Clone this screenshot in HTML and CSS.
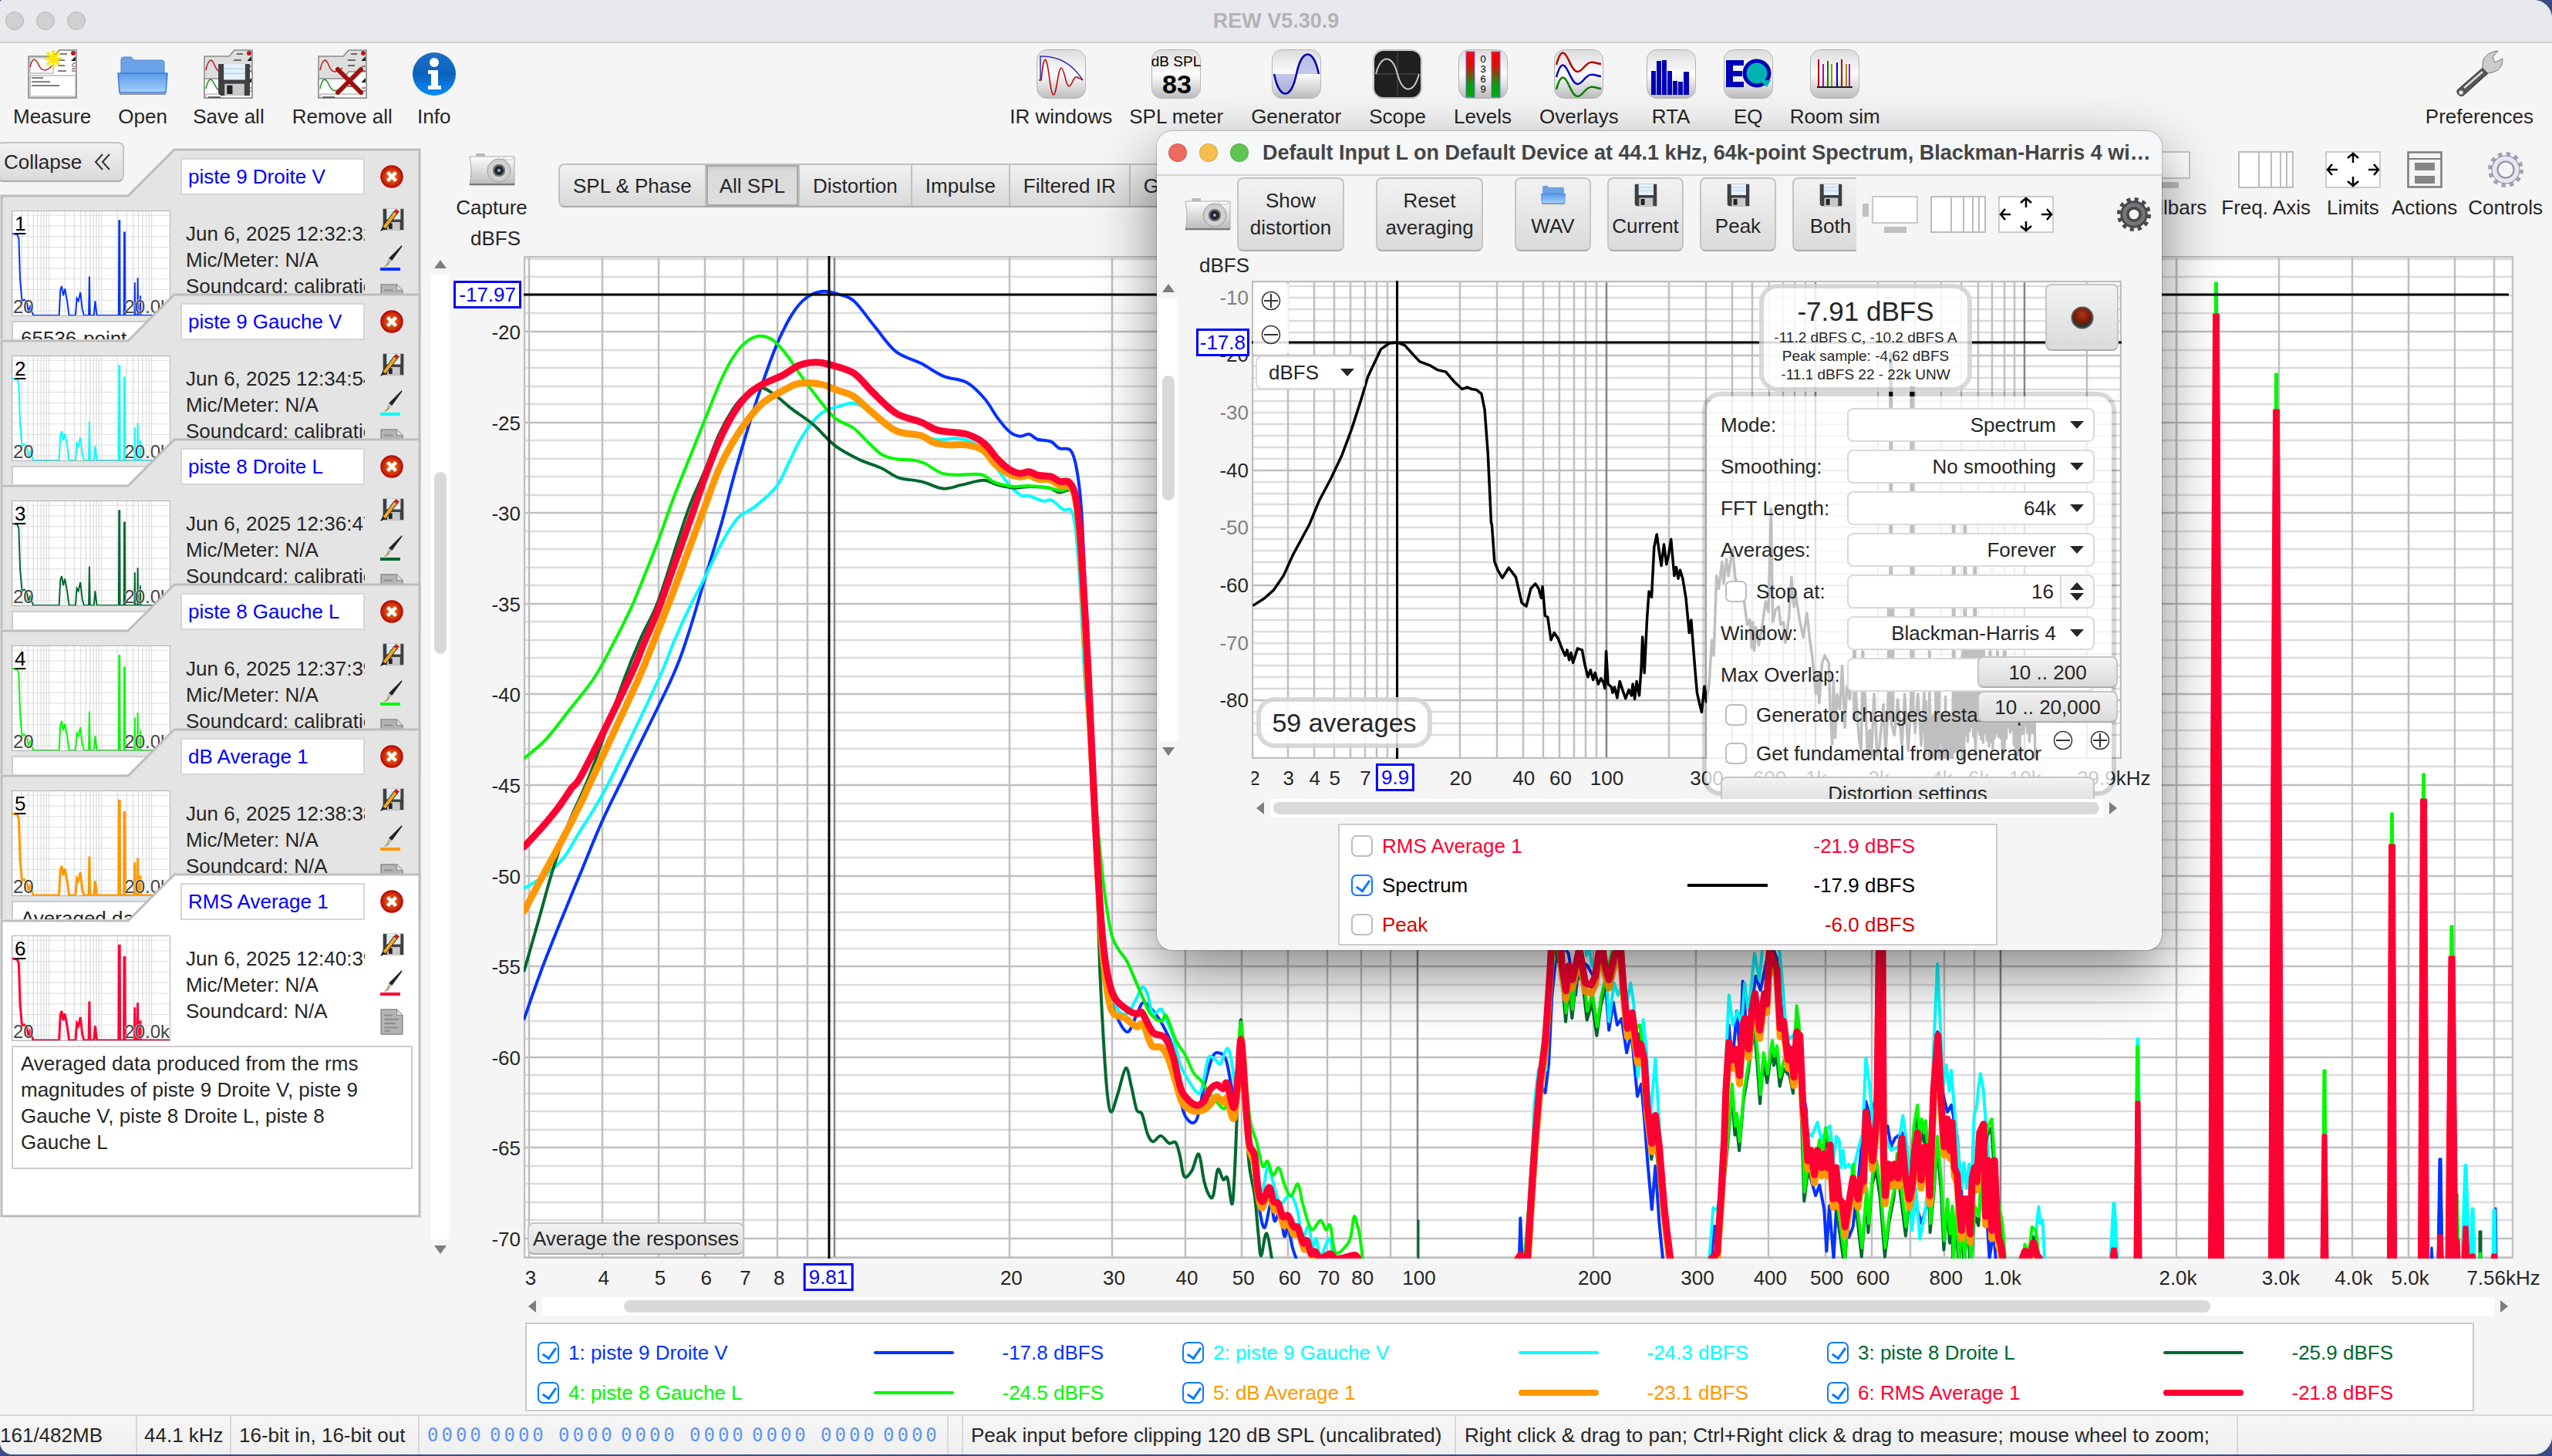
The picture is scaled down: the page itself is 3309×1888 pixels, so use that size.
FILE: index.html
```html
<!DOCTYPE html>
<html lang="en">
<head>
<meta charset="utf-8">
<title>REW V5.30.9</title>
<link rel="stylesheet" href="styles.css">
</head>
<body>
<svg class="sprite" aria-hidden="true">
  <defs>
    <linearGradient id="g-tile" x1="0" y1="0" x2="0" y2="1"><stop offset="0" stop-color="#dcdcdc"/><stop offset=".5" stop-color="#fcfcfc"/><stop offset="1" stop-color="#bdbdbd"/></linearGradient>
    <linearGradient id="g-folder" x1="0" y1="0" x2="0" y2="1"><stop offset="0" stop-color="#5b9bea"/><stop offset="1" stop-color="#a5cffb"/></linearGradient>
    <linearGradient id="g-info" x1="0" y1="0" x2="0" y2="1"><stop offset="0" stop-color="#1f6fc4"/><stop offset=".5" stop-color="#0b62bd"/><stop offset="1" stop-color="#0a8bff"/></linearGradient>
    <linearGradient id="g-level" x1="0" y1="0" x2="0" y2="1"><stop offset="0" stop-color="#f00"/><stop offset=".3" stop-color="#e01000"/><stop offset=".72" stop-color="#0a9a10"/><stop offset="1" stop-color="#00b400"/></linearGradient>
    <linearGradient id="g-metal" x1="0" y1="0" x2="0" y2="1"><stop offset="0" stop-color="#fdfdfd"/><stop offset="1" stop-color="#b9b9b9"/></linearGradient>
    <radialGradient id="g-del"><stop offset="0" stop-color="#f08a1c"/><stop offset="1" stop-color="#c40d05"/></radialGradient>
    <radialGradient id="g-led" cx=".5" cy=".35"><stop offset="0" stop-color="#a83a20"/><stop offset=".8" stop-color="#7a1800"/><stop offset="1" stop-color="#333"/></radialGradient>
  </defs>
  <symbol id="i-doc-half" viewBox="0 0 64 64">
    <path d="M1 9H33L40 1H63V63H1Z" fill="#dedede" stroke="#8a8a8a" stroke-width="1.5"/>
    <path d="M1 38H33L40 29H63V63H1Z" fill="#fff" stroke="#8a8a8a" stroke-width="1.5"/>
    <path d="M3 27C6 13 10 10 14 20S22 32 32 24" fill="none" stroke="#c01818" stroke-width="1.5"/>
    <path d="M3 51C6 37 10 36 14 45S22 57 32 49" fill="none" stroke="#188a18" stroke-width="1.5"/>
    <path d="M3 58V63M3 58H60" stroke="#999" fill="none"/>
    <path d="M43 6h8M39 14h10M39 21h9M39 48h10M6 62h16" stroke="#444" stroke-width="1.5"/>
    <circle cx="59" cy="5" r="3" fill="#c4161c"/><path d="M57 14l5-5v6h-5zM57 42l5-5v6h-5z" fill="#222"/><path d="M57 22h5M57 28h5M57 50h5M57 54h5" stroke="#333"/>
  </symbol>
  <symbol id="i-measure" viewBox="0 0 64 64">
    <path d="M1 9H33L41 1H63V63H1Z" fill="#fff" stroke="#808080" stroke-width="1.5"/>
    <rect x="3" y="11" width="30" height="20" fill="#fff" stroke="#bbb" stroke-width="1.5"/>
    <path d="M3 23C6 10 10 11 14 20S24 29 32 21" fill="none" stroke="#c01818" stroke-width="1.5"/>
    <rect x="3" y="34" width="59" height="27" fill="#fff" stroke="#999"/>
    <path d="M42 6h9M39 14h9M39 21h9M39 28h11M5 37h15M5 42h24M5 47h36" stroke="#555" stroke-width="1.5"/>
    <circle cx="59" cy="5" r="3" fill="#c4161c"/><path d="M56 15l6-6v6z" fill="#222"/><path d="M57 20l5-3M57 25h5M57 28h5" stroke="#333"/><path d="M57 22h5" stroke="#c01818"/>
    <path d="M33 1V23M22 12H44M25 4L41 20M41 4L25 20" stroke="#ffe600" stroke-width="3.5"/>
  </symbol>
  <symbol id="i-folder" viewBox="0 0 66 50">
    <path d="M5 4Q5 1 8 1H18L22 5H58Q61 5 61 8V24H5Z" fill="#6ba1e6" stroke="#4d86d3"/>
    <path d="M1 22H65L63 47H3Z" fill="url(#g-folder)" stroke="#3b7ad0" stroke-width="1.5"/><path d="M3 49H63" stroke="#777" stroke-width="1.5"/>
  </symbol>
  <symbol id="i-floppy" viewBox="0 0 42 42">
    <path d="M1 1H41V41H4L1 38Z" fill="#3f3f41"/><rect x="8" y="1" width="27" height="20" fill="#e4f0fb"/><path d="M8 7H35M8 13H35" stroke="#a9c8e6"/><rect x="9" y="26" width="25" height="15" fill="#c9c9c9"/><rect x="12" y="28" width="7" height="11" fill="#222"/>
  </symbol>
  <symbol id="i-save-pencil" viewBox="0 0 32 30">
    <svg x="4" y="0" width="28" height="29" viewBox="0 0 42 42" preserveAspectRatio="none"><use href="#i-floppy"/></svg>
    <path d="M4 24L19 4L23 7L8 27Z" fill="#f0a81e" stroke="#222"/><path d="M19 4l2-3 5 3-3 4z" fill="#d02018"/><path d="M4 24l-3 6 7-3z" fill="#222"/>
  </symbol>
  <symbol id="i-delete" viewBox="0 0 30 30"><circle cx="15" cy="15" r="14" fill="url(#g-del)" stroke="#b00c06" stroke-width="1.5"/><path d="M9.500 9.500L20.500 20.500M20.500 9.500L9.500 20.500" stroke="#fff" stroke-width="4.500"/></symbol>
  <symbol id="i-brush" viewBox="0 0 30 34"><path d="M28 1L15 19L12 17Z" fill="#222" stroke="#222" stroke-width="1.500"/><path d="M12 17L15 20L12 24L9 21Z" fill="#b9b9b9"/><path d="M10 21L12 24Q9 28 4 28Q8 26 10 21Z" fill="#b99a5a"/><rect x="0" y="29" width="26" height="4" fill="currentColor"/></symbol>
  <symbol id="i-note" viewBox="0 0 28 32"><path d="M1 1H20L27 8V31H1Z" fill="#b4b4b4" stroke="#8a8a8a" stroke-width="1.500"/><path d="M20 1V8H27" fill="#ddd" stroke="#8a8a8a"/><path d="M5 8H15M5 13H22M5 18H18M5 23H22M5 27H12" stroke="#8c8c8c" stroke-width="2"/></symbol>
  <symbol id="i-camera" viewBox="0 0 60 42">
    <rect x="9" y="0" width="12" height="4" rx="1" fill="#bbb"/><path d="M1 4H59V41H1Q5 22 1 4Z" fill="url(#g-metal)" stroke="#aaa"/><path d="M1 39H59V41H1Z" fill="#777"/><rect x="45" y="4" width="12" height="4" rx="2" fill="#fff" stroke="#bbb"/>
    <circle cx="39" cy="22" r="15" fill="#cfcfcf" stroke="#999"/><circle cx="39" cy="22" r="9" fill="#777" stroke="#eee"/><circle cx="39" cy="22" r="6" fill="#1e2430"/><circle cx="39" cy="22" r="2" fill="#9db4d0"/>
  </symbol>
  <symbol id="i-freq" viewBox="0 0 72 48"><rect x="1" y="1" width="70" height="46" fill="#fff" stroke="#bcbcbc" stroke-width="2"/><path d="M27 1V47M43 1V47M55 1V47M63 1V47" stroke="#bcbcbc" stroke-width="2"/></symbol>
  <symbol id="i-limits" viewBox="0 0 72 48"><rect x="1" y="1" width="70" height="46" fill="#fff" stroke="#bcbcbc" stroke-width="1.500"/><path d="M36 15V3M29 9L36 3L43 9M36 33V45M29 39L36 45L43 39M16 24H3M9 17L3 24L9 31M56 24H69M63 17L69 24L63 31" fill="none" stroke="#000" stroke-width="2.500"/></symbol>
  <symbol id="i-bars" viewBox="0 0 72 48"><rect x="0" y="10" width="8" height="17" fill="#bfbfbf"/><rect x="13" y="1" width="58" height="34" fill="#fff" stroke="#c8c8c8" stroke-width="2"/><rect x="28" y="40" width="29" height="8" fill="#bfbfbf"/></symbol>
  <symbol id="i-actions" viewBox="0 0 46 48"><rect x="1.500" y="1.500" width="43" height="45" fill="#f4f4f4" stroke="#7c7c7c" stroke-width="2.500"/><path d="M1 10H45" stroke="#7c7c7c" stroke-width="2"/><path d="M10 20H36M10 37H36" stroke="#858585" stroke-width="10"/></symbol>
  <symbol id="i-gear" viewBox="0 0 48 48"><circle cx="24" cy="24" r="20" fill="none" stroke="currentColor" stroke-width="6" stroke-dasharray="5.24 5.24"/><circle cx="24" cy="24" r="12.500" fill="none" stroke="currentColor" stroke-width="12"/><circle cx="24" cy="24" r="13" fill="none" stroke="#dcdcec" stroke-opacity=".3" stroke-width="5"/></symbol>
  <symbol id="i-gear-light" viewBox="0 0 48 48"><circle cx="24" cy="24" r="20" fill="none" stroke="#a2a2ae" stroke-width="6" stroke-dasharray="5.24 5.24"/><circle cx="24" cy="24" r="14" fill="#f5f5f5" stroke="#8d8d9c" stroke-width="9"/><circle cx="24" cy="24" r="14.500" fill="none" stroke="#e6e6f2" stroke-width="6"/></symbol>
  <symbol id="i-zoom-in" viewBox="0 0 26 26"><circle cx="13" cy="13" r="11.500" fill="none" stroke="#333" stroke-width="1.500"/><path d="M4 13H22M13 4V22" stroke="#333" stroke-width="2"/></symbol>
  <symbol id="i-zoom-out" viewBox="0 0 26 26"><circle cx="13" cy="13" r="11.500" fill="none" stroke="#333" stroke-width="1.500"/><path d="M4 13H22" stroke="#333" stroke-width="2"/></symbol>
  <symbol id="i-tile" viewBox="0 0 64 64"><rect x=".5" y=".5" width="63" height="63" rx="13" fill="url(#g-tile)" stroke="#b4b4b4"/></symbol>
</svg>

<div class="app">
  <header class="titlebar">
    <div class="lights idle"><i></i><i></i><i></i></div>
    <h1>REW V5.30.9</h1>
  </header>

  <nav class="toolbar">
    <div class="tools left">
      <button class="tool"><svg class="icon"><use href="#i-measure"/></svg><span>Measure</span></button>
      <button class="tool"><svg class="icon wide" viewBox="0 0 66 64"><use href="#i-folder" y="9" width="66" height="50"/></svg><span>Open</span></button>
      <button class="tool"><svg class="icon" viewBox="0 0 64 64"><use href="#i-doc-half" width="64" height="64"/><use href="#i-floppy" x="18" y="18" width="43" height="43"/></svg><span>Save all</span></button>
      <button class="tool"><svg class="icon" viewBox="0 0 64 64"><use href="#i-doc-half" width="64" height="64"/><path d="M26 26L56 56M56 26L26 56" stroke="#a01010" stroke-width="6" stroke-linecap="round"/></svg><span>Remove all</span></button>
      <button class="tool"><svg class="icon" viewBox="0 0 64 64"><circle cx="32" cy="32" r="28" fill="url(#g-info)"/><circle cx="32" cy="17" r="6" fill="#fff"/><path d="M24 27H37V47H41V52H24V47H28V32H24Z" fill="#fff"/></svg><span>Info</span></button>
    </div>
    <div class="tools middle">
      <div class="pair">
        <button class="tool"><svg class="icon" viewBox="0 0 64 64"><use href="#i-tile"/><path d="M5 40V9Q40 8 60 40" fill="none" stroke="#3030c0" stroke-width="1.500"/><path d="M3 40H6C8 20 10 8 13 16S18 59 22 59S28 24 32 24S38 48 42 48S48 34 52 36S58 38 60 40" fill="none" stroke="#b80000" stroke-width="1.500"/></svg><span>IR windows</span></button>
        <button class="tool"><svg class="icon" viewBox="0 0 64 64"><use href="#i-tile"/><text x="32" y="22" font-size="19" text-anchor="middle">dB SPL</text><text x="33" y="57" font-size="34" font-weight="bold" text-anchor="middle">83</text></svg><span>SPL meter</span></button>
      </div>
      <button class="tool"><svg class="icon" viewBox="0 0 64 64"><use href="#i-tile"/><path d="M3 32C10 66 25 66 32 32S54 -2 61 32Z" fill="#8a94dc" fill-opacity=".5"/><path d="M3 32C10 66 25 66 32 32S54 -2 61 32" fill="none" stroke="#0000b4" stroke-width="2.500"/></svg><span>Generator</span></button>
      <button class="tool"><svg class="icon" viewBox="0 0 64 64"><use href="#i-tile"/><rect x="2" y="2" width="60" height="60" rx="12" fill="#202020"/><path d="M32 4V60M4 32H60" stroke="#555"/><path d="M4 32C11 6 25 6 32 32S53 58 60 32" fill="none" stroke="#c8c8c8" stroke-width="2"/></svg><span>Scope</span></button>
      <button class="tool"><svg class="icon" viewBox="0 0 64 64"><use href="#i-tile"/><rect x="10" y="3" width="11" height="59" fill="url(#g-level)" stroke="#66e"/><rect x="43" y="3" width="11" height="59" fill="url(#g-level)" stroke="#66e"/><text x="32" y="17" font-size="13" text-anchor="middle">0</text><text x="32" y="30" font-size="13" text-anchor="middle">3</text><text x="32" y="43" font-size="13" text-anchor="middle">6</text><text x="32" y="56" font-size="13" text-anchor="middle">9</text></svg><span>Levels</span></button>
      <button class="tool"><svg class="icon" viewBox="0 0 64 64"><use href="#i-tile"/><g fill="none" stroke-width="2.500"><path d="M3 20C8 2 12 0 18 12S28 36 38 24S52 18 61 19" stroke="#b80000"/><path d="M3 36C8 18 12 16 18 28S28 52 38 40S52 34 61 35" stroke="#0000c0"/><path d="M3 52C8 34 12 32 18 44S28 68 38 56S52 50 61 51" stroke="#008000"/></g></svg><span>Overlays</span></button>
      <button class="tool"><svg class="icon" viewBox="0 0 64 64"><use href="#i-tile"/><path d="M6 59V28H12V59ZM13 59V15H19V59ZM20 59V14H26V59ZM27 59V28H33V59ZM34 59V41H40V59ZM41 59V42H47V59ZM48 59V29H55V59Z" fill="#0000b8"/></svg><span>RTA</span></button>
      <div class="pair">
        <button class="tool"><svg class="icon" viewBox="0 0 64 64"><use href="#i-tile"/><path d="M3 14H26V21H12V28H24V35H12V42H26V49H3Z" fill="#0000b8"/><ellipse cx="43" cy="31" rx="16" ry="16" fill="#00b2b2" stroke="#0000b8" stroke-width="5"/><path d="M46 40L61 40L56 49Z" fill="#00b2b2"/></svg><span>EQ</span></button>
        <button class="tool"><svg class="icon" viewBox="0 0 64 64"><use href="#i-tile"/><g stroke-width="2"><path d="M11 13V49M41 13V49" stroke="#b80000"/><path d="M17 19V49M51 19V49" stroke="#b800b8"/><path d="M23 15V49" stroke="#008000"/><path d="M28 19V49M47 19V49" stroke="#a88a00"/><path d="M35 17V49" stroke="#0000b8"/><path d="M9 49H55" stroke="#222"/></g></svg><span>Room sim</span></button>
      </div>
    </div>
    <div class="tools right">
      <button class="tool"><svg class="icon" viewBox="0 0 64 64"><path d="M3 53L36 24L43 31L11 60A6 6 0 0 1 3 53Z" fill="#555" stroke="#333"/><path d="M12 50L36 29" stroke="#ddd" stroke-width="2.500"/><path d="M36 24Q34 8 50 3L56 2L49 10L52 17L62 12Q62 26 51 29Q46 31 43 31Z" fill="#ccc" stroke="#777"/><circle cx="8" cy="56" r="3" fill="#eee" stroke="#888"/></svg><span>Preferences</span></button>
    </div>
  </nav>

  <div class="workspace">
    <aside class="sidebar">
      <button class="btn collapse">Collapse <svg viewBox="0 0 22 22"><path d="M11 1L2 11L11 21M20 1L11 11L20 21" fill="none" stroke="#333" stroke-width="2"/></svg></button>
      <div class="cards" id="cards"></div>
      <div class="vscroll side"><b class="up"></b><div class="track"><i></i></div><b class="down"></b></div>
    </aside>

    <main class="main">
      <div class="graphbar">
        <div class="capture">
          <button class="tool small"><svg class="cam"><use href="#i-camera"/></svg><span>Capture</span></button>
          <p class="unit">dBFS</p>
        </div>
        <div class="tabs">
          <button>SPL &amp; Phase</button><button class="on">All SPL</button><button>Distortion</button><button>Impulse</button><button>Filtered IR</button><button>GD</button>
        </div>
        <div class="viewtools">
          <button class="tool small"><svg class="view"><use href="#i-bars"/></svg><span>Scrollbars</span></button>
          <button class="tool small"><svg class="view"><use href="#i-freq"/></svg><span>Freq. Axis</span></button>
          <button class="tool small"><svg class="view"><use href="#i-limits"/></svg><span>Limits</span></button>
          <button class="tool small"><svg class="view"><use href="#i-actions"/></svg><span>Actions</span></button>
          <button class="tool small"><svg class="view"><use href="#i-gear-light"/></svg><span>Controls</span></button>
        </div>
      </div>
      <div class="graph">
        <div class="yaxis" id="main-y"></div>
        <div class="plot">
          <svg id="main-plot" viewBox="0 0 2580 1300" preserveAspectRatio="none"></svg>
          <button class="btn average">Average the responses</button>
        </div>
      </div>
      <div class="xaxis" id="main-x"></div>
      <div class="hscroll"><b class="prev"></b><div class="track"><i></i></div><b class="next"></b></div>
      <div class="legend" id="legend"></div>
    </main>
  </div>

  <footer class="status">
    <span class="c1">161/482MB</span><span class="c2">44.1 kHz</span><span class="c3">16-bit in, 16-bit out</span>
    <span class="bits" id="bits"></span><span class="c5"></span>
    <span class="c6">Peak input before clipping 120 dB SPL (uncalibrated)</span><span class="c7">Right click &amp; drag to pan; Ctrl+Right click &amp; drag to measure; mouse wheel to zoom;</span>
  </footer>
</div>

<section class="dialog" aria-label="RTA">
  <header class="dialog-title">
    <div class="lights"><i></i><i></i><i></i></div>
    <h2>Default Input L on Default Device at 44.1 kHz, 64k-point Spectrum, Blackman-Harris 4 wi…</h2>
  </header>
  <div class="dialog-tools">
    <svg class="cam"><use href="#i-camera"/></svg>
    <div class="dialog-buttons">
      <button class="btn big">Show<br>distortion</button>
      <button class="btn big">Reset<br>averaging</button>
      <div class="files">
        <button class="btn file"><svg><use href="#i-folder"/></svg>WAV</button>
        <button class="btn file"><svg><use href="#i-floppy"/></svg>Current</button>
        <button class="btn file"><svg><use href="#i-floppy"/></svg>Peak</button>
        <button class="btn file"><svg><use href="#i-floppy"/></svg>Both</button>
      </div>
    </div>
    <svg class="view"><use href="#i-bars"/></svg><svg class="view"><use href="#i-freq"/></svg><svg class="view"><use href="#i-limits"/></svg>
    <svg class="view dark"><use href="#i-gear"/></svg>
  </div>
  <p class="unit">dBFS</p>
  <div class="rta">
    <div class="vscroll"><b class="up"></b><div class="track"><i></i></div><b class="down"></b></div>
    <div class="yaxis" id="rta-y"></div>
    <div class="stage">
      <svg id="rta-plot" viewBox="0 0 1128 620" preserveAspectRatio="none"></svg>
      <div class="xaxis" id="rta-x"></div>
      <div class="zoom-y"><svg><use href="#i-zoom-in"/></svg><svg><use href="#i-zoom-out"/></svg></div>
      <div class="select unit-select"><select aria-label="Unit"><option>dBFS</option></select></div>
      <div class="bubble averages">59 averages</div>
      <div class="bubble level"><strong>-7.91 dBFS</strong><span>-11.2 dBFS C, -10.2 dBFS A</span><span>Peak sample: -4,62 dBFS</span><span>-11.1 dBFS 22 - 22k UNW</span></div>
      <button class="btn record" aria-label="Record"><svg viewBox="0 0 30 30"><circle cx="15" cy="15" r="13.500" fill="url(#g-led)" stroke="#555" stroke-width="2"/></svg></button>
      <form class="bubble panel">
        <label for="mode">Mode:</label><div class="select"><select id="mode"><option>Spectrum</option></select></div>
        <label for="smooth">Smoothing:</label><div class="select"><select id="smooth"><option>No smoothing</option></select></div>
        <label for="fft">FFT Length:</label><div class="select"><select id="fft"><option>64k</option></select></div>
        <label for="avg">Averages:</label><div class="select"><select id="avg"><option>Forever</option></select></div>
        <label class="check"><input type="checkbox">Stop at:</label><div class="spin"><input type="text" value="16" aria-label="Stop at"></div>
        <label for="win">Window:</label><div class="select"><select id="win"><option>Blackman-Harris 4</option></select></div>
        <label for="overlap">Max Overlap:</label><div class="select bare"><select id="overlap"><option></option></select></div>
        <label class="check full"><input type="checkbox">Generator changes restart capture</label>
        <label class="check full"><input type="checkbox">Get fundamental from generator</label>
        <button type="button" class="btn full distortion">Distortion settings</button>
      </form>
      <div class="ranges"><button class="btn">10 .. 200</button><button class="btn">10 .. 20,000</button></div>
      <div class="zoom-x"><svg><use href="#i-zoom-out"/></svg><svg><use href="#i-zoom-in"/></svg></div>
    </div>
  </div>
  <div class="hscroll rta-scroll"><b class="prev"></b><div class="track"><i></i></div><b class="next"></b></div>
  <div class="rta-legend">
    <label class="rms"><input type="checkbox"><span>RMS Average 1</span><i></i><output>-21.9 dBFS</output></label>
    <label><input type="checkbox" checked><span>Spectrum</span><i class="line"></i><output>-17.9 dBFS</output></label>
    <label class="peak"><input type="checkbox"><span>Peak</span><i></i><output>-6.0 dBFS</output></label>
  </div>
</section>
<script src="app.js"></script>
</body>
</html>
```
FILE: styles.css
```css
* { box-sizing: border-box; }
body { margin: 0; height: 100vh; overflow: hidden; background: #3c4b86; color: #262626; font: 26px/32px "Liberation Sans", Arial, sans-serif; }
button, input, select, output { font: inherit; color: inherit; margin: 0; }
button { background: none; border: 0; padding: 0; white-space: nowrap; }
h1, h2, p { margin: 0; font-size: 26px; }
svg { display: block; }
svg text { font-family: "Liberation Sans", Arial, sans-serif; fill: #000; }
.sprite { position: absolute; width: 0; height: 0; }

.app { height: calc(100vh - 2px); display: flex; flex-direction: column; background: #f5f5f5; border-radius: 4px 24px 24px 16px; overflow: hidden; }

.titlebar { height: 56px; flex: none; display: grid; grid-template-columns: 1fr auto 1fr; align-items: center; background: #e8e9ed; border-bottom: 2px solid #cfcfd1; }
.titlebar h1 { color: #b2b3b6; font-size: 27px; }
.lights { display: flex; gap: 16px; padding-left: 7px; }
.lights i { width: 24px; height: 24px; border-radius: 50%; border: 1px solid rgba(0, 0, 0, .12); background: #ed6a5e; }
.lights i:nth-child(2) { background: #f5bf4f; }
.lights i:nth-child(3) { background: #61c554; }
.lights.idle i { background: #cfd0d2; border-color: #b5b5b8; }

.toolbar { height: 116px; flex: none; display: grid; grid-template-columns: 39.6% auto 1fr; padding: 8px 24px 0 14px; }
.tools { display: flex; align-items: flex-start; gap: 36px; }
.tools.left { padding-left: 3px; }
.tools.left .tool:nth-child(2) { margin-right: -4px; }
.tools.left .tool:nth-child(4) { margin-right: -14px; }
.tools.left .tool:nth-child(1) { margin-right: -2px; }
.tools.right { justify-content: flex-end; }
.pair { display: flex; gap: 22px; }
.tool { display: flex; flex-direction: column; align-items: center; gap: 7px; }
.icon { width: 64px; height: 64px; }
.icon.wide { width: 66px; }

.workspace { flex: 1; display: flex; min-height: 0; }
.sidebar { width: 588px; flex: none; position: relative; display: flex; }
.btn { background: linear-gradient(#f2f2f2, #dadada); border: 2px solid #c4c4c4; border-bottom-color: #acacac; border-radius: 8px; text-align: center; }
.collapse { position: absolute; left: -4px; top: 12px; width: 165px; height: 52px; z-index: 2; display: flex; align-items: center; gap: 16px; padding-left: 7px; }
.collapse svg { width: 22px; height: 22px; }
.cards { width: 559px; padding-top: 20px; }
.card { position: relative; height: 248px; margin-bottom: -60px; overflow: hidden; padding-left: 15px; display: grid; grid-template-columns: 206px 239px 44px; grid-template-rows: 217px 160px; gap: 7px 13px; align-items: start; }
.card.selected { height: 447px; margin-bottom: 0; }
.card > * { position: relative; }
.card > .shape { position: absolute; left: 0; top: 0; width: 547px; height: 447px; fill: #e4e4e4; stroke: #bdbdbd; stroke-width: 3; }
.card.selected > .shape { fill: #fff; }
.thumb { margin-top: 81px; height: 137px; border: 1px solid #b0b0b0; background: #fff; }
.thumb svg { width: 100%; height: 100%; }
.thumb b, .thumb span { position: absolute; font-size: 24px; font-weight: normal; line-height: 26px; color: #444; text-shadow: 0 0 2px #fff, 0 0 2px #fff; bottom: -2px; left: 1px; }
.thumb span { left: auto; right: 0; }
.thumb u { position: absolute; left: 3px; top: 0; font-size: 26px; color: #000; text-underline-offset: 3px; }
.meta { overflow: hidden; white-space: nowrap; padding-top: 13px; }
.meta input { display: block; width: 239px; height: 48px; border: 2px solid #d6d6d6; background: #fff; color: #00f; padding: 0 8px; margin-bottom: 33px; }
.meta p { padding-left: 7px; line-height: 34px; }
.side-icons { display: flex; flex-direction: column; align-items: center; padding-top: 22px; }
.side-icons svg { flex: none; width: 32px; height: 34px; margin: 8px 0; }
.side-icons svg:first-child { width: 30px; height: 30px; margin: 0 0 16px; }
.notes { grid-column: 1 / 4; width: 520px; height: 160px; border: 2px solid #ccc; background: #fff; font: inherit; color: inherit; line-height: 34px; resize: none; padding: 4px 44px 0 10px; overflow: hidden; }

.vscroll { width: 24px; display: flex; flex-direction: column; align-items: center; }
.vscroll b, .hscroll b { border: 8px solid transparent; flex: none; }
.vscroll .up { border-top: 0; border-bottom: 11px solid #7d7d7d; }
.vscroll .down { border-bottom: 0; border-top: 11px solid #7d7d7d; }
.vscroll .track { flex: 1; width: 24px; background: #fff; margin: 8px 0; padding: 0 4px; }
.vscroll i { display: block; width: 16px; border-radius: 8px; background: #d9d9d9; }
.vscroll.side { padding-top: 165px; margin-bottom: 208px; }
.side .track i { margin-top: 256px; height: 236px; }
.hscroll { display: flex; align-items: center; height: 24px; }
.hscroll .prev { border-left: 0; border-right: 10px solid #7d7d7d; }
.hscroll .next { border-right: 0; border-left: 10px solid #7d7d7d; }
.hscroll .track { flex: 1; height: 24px; background: #fff; margin: 0 8px; padding: 4px 0; }
.hscroll i { display: block; height: 16px; border-radius: 8px; background: #d9d9d9; }

.main { flex: 1; min-width: 0; display: flex; flex-direction: column; }
.graphbar { height: 160px; flex: none; display: flex; align-items: flex-start; padding: 24px 12px 0 0; }
.capture { width: 99px; }
.capture .tool { width: 99px; }
.tool.small { gap: 9px; }
.cam { width: 60px; height: 48px; flex: none; }
.unit { text-align: right; padding: 8px 12px 0 0; }
.tabs { display: flex; margin: 16px 0 0 37px; height: 57px; border: 2px solid #c0c0c0; border-bottom-color: #aaa; border-radius: 8px; background: linear-gradient(#f2f2f2, #d8d8d8); }
.tabs button { padding: 0 17px; border-right: 2px solid #c0c0c0; }
.tabs .on { background: linear-gradient(#c8c8c8, #dadada 8px, #dedede); box-shadow: inset 0 0 0 2px #a8a8a8; }
.viewtools { display: flex; gap: 14px; margin-left: auto; }
.viewtools .tool:nth-child(-n+2) { margin-right: 5px; }
.view { width: 72px; height: 48px; }
.viewtools .tool:nth-child(4) .view { width: 46px; }

.graph { flex: 1; min-height: 0; display: flex; }
.yaxis { position: relative; width: 91px; flex: none; }
.yaxis span, .yaxis em { position: absolute; right: 4px; line-height: 32px; margin-top: -16px; font-style: normal; }
.yaxis em, .xaxis em { border: 3px solid #00f; color: #00f; background: #fff; line-height: 30px; padding: 0 4px; margin-top: -18px; right: 3px; z-index: 1; }
.yaxis .dim { color: #808080; }
.plot { position: relative; flex: 1; margin-right: 50px; }
.plot svg { position: absolute; width: 100%; height: 100%; background: #fff; overflow: hidden; }
.plot .average { position: absolute; left: 5px; bottom: 5px; height: 42px; padding: 0 5px; }
.xaxis { position: relative; height: 50px; margin: 0 50px 0 91px; flex: none; }
.xaxis span, .xaxis em { position: absolute; top: 9px; transform: translateX(-50%); font-style: normal; white-space: nowrap; }
.xaxis em { top: 6px; margin: 0; right: auto; }
.main .hscroll { margin: 0 57px 0 97px; flex: none; }
.main .hscroll i { margin: 0 368px 0 106px; }
.legend { height: 115px; flex: none; margin: 9px 101px 4px 93px; border: 2px solid #ccc; background: #fff; display: grid; grid-template-columns: repeat(3, 836px); align-content: start; padding-top: 11px; }
.legend label { display: grid; grid-template-columns: 28px 384px 104px 182px; column-gap: 12px; align-items: center; height: 52px; padding-left: 14px; }
.legend output, .rta-legend output { text-align: right; }
.legend i { height: 4px; border-radius: 4px; background: currentColor; }
.legend .thick i { height: 8px; }

input[type="checkbox"] { appearance: none; width: 28px; height: 28px; flex: none; border: 2px solid #bdbdbd; border-radius: 7px; background: #fff; position: relative; }
input[type="checkbox"]:checked { border-color: #0a7aff; }
input[type="checkbox"]:checked::after { content: ""; position: absolute; left: 8px; top: 2px; width: 8px; height: 15px; border: solid #0a7aff; border-width: 0 3px 3px 0; transform: rotate(35deg); }

.status { height: 52px; flex: none; display: flex; align-items: center; border-top: 2px solid #d8d8d8; background: linear-gradient(#f6f6f6, #efefef); white-space: nowrap; line-height: 50px; }
.status > span { height: 50px; border-right: 2px solid #d8d8d8; padding: 0 10px; flex: none; }
.status .c1 { width: 178px; padding-left: 0; }
.status .c2 { width: 122px; padding: 0 9px; }
.status .c3 { width: 244px; }
.status .bits { width: 686px; display: flex; gap: 20px; color: #5f94ee; font: 24px/50px "DejaVu Sans Mono", monospace; }
.bits u { text-decoration: none; display: flex; gap: 12px; }
.bits s { text-decoration: none; display: flex; gap: 4px; width: 69px; }
.status .c5 { width: 19px; padding: 0; }
.status .c6 { width: 639px; }
.status .c7 { width: 1014px; padding-left: 11px; }

.dialog { position: absolute; left: 1500px; top: 170px; width: 1303px; background: #f5f5f5; border-radius: 20px; box-shadow: 0 0 2px rgba(0, 0, 0, .6), 0 30px 80px rgba(0, 0, 0, .48); overflow: hidden; padding-bottom: 6px; }
.dialog-title { display: flex; align-items: center; height: 58px; background: #f5f7f9; border-bottom: 2px solid #d4d5d6; }
.dialog-title .lights { padding-left: 15px; }
.dialog-title h2 { margin-left: 18px; color: #454545; white-space: nowrap; font-size: 27px; }
.dialog-tools { display: flex; align-items: center; height: 100px; padding: 0 13px 0 36px; }
.dialog-buttons { display: flex; width: 803px; margin: 0 8px; overflow: hidden; gap: 41px; }
.btn.big { width: 139px; height: 96px; flex: none; line-height: 35px; }
.files { display: flex; gap: 21px; }
.file { width: 99px; height: 96px; flex: none; display: flex; flex-direction: column; align-items: center; gap: 9px; padding-top: 6px; }
.file svg { width: 32px; height: 30px; }
.dialog-tools .view { margin-right: 16px; flex: none; }
.dialog-tools .dark { width: 46px; color: #4a4a4a; margin: 0 0 0 auto; }
.dialog > .unit { width: 120px; height: 36px; padding: 0; }
.rta { display: flex; height: 672px; padding-left: 3px; }
.rta .vscroll { padding-top: 4px; height: 616px; }
.rta .vscroll .track i { margin-top: 100px; height: 162px; }
.rta .yaxis { width: 96px; height: 620px; }
.rta .yaxis em { right: 3px; padding: 0 2px; }
.stage { position: relative; flex: 1; height: 672px; overflow: hidden; }
#rta-plot { width: 1128px; height: 620px; background: #fff; }
#rta-x { width: 1128px; margin: 0; }
.zoom-y { position: absolute; left: 2px; top: 4px; width: 46px; height: 90px; background: rgba(255, 255, 255, .85); display: flex; flex-direction: column; align-items: center; gap: 18px; padding-top: 9px; }
.zoom-y svg, .zoom-x svg { width: 26px; height: 26px; }
.zoom-x { position: absolute; left: 1039px; top: 583px; display: flex; gap: 22px; }
.select { position: relative; height: 44px; }
.select select { appearance: none; width: 100%; height: 44px; border: 2px solid #d9d9d9; border-radius: 8px; background: #fff; text-align: right; text-align-last: right; padding: 0 48px 0 8px; }
.select::after { content: ""; position: absolute; right: 14px; top: 17px; border: 9px solid transparent; border-top: 10px solid #262626; border-bottom: 0; }
.select.bare::after { display: none; }
.unit-select { position: absolute; left: 5px; top: 97px; width: 142px; }
.unit-select select { text-align: left; text-align-last: left; padding: 0 0 0 15px; }
.spin { position: relative; height: 44px; }
.spin input { width: 321px; height: 44px; border: 2px solid #d9d9d9; border-radius: 8px; background: linear-gradient(to left, #fafafa 41px, #d9d9d9 41px, #d9d9d9 43px, #fff 43px); text-align: right; padding-right: 51px; }
.spin::before, .spin::after { content: ""; position: absolute; right: 14px; border: 9px solid transparent; }
.spin::before { top: 10px; border-bottom: 10px solid #262626; border-top: 0; }
.spin::after { bottom: 10px; border-top: 10px solid #262626; border-bottom: 0; }
.bubble { position: absolute; border: 6px solid rgba(0, 0, 0, .15); border-radius: 24px; background: rgba(255, 255, 255, .75); background-clip: padding-box; }
.averages { left: 6px; top: 540px; width: 228px; height: 66px; font-size: 34px; line-height: 54px; text-align: center; background: rgba(255, 255, 255, .85); }
.level { left: 658px; top: 4px; width: 276px; height: 140px; display: flex; flex-direction: column; align-items: center; font-size: 19px; line-height: 24px; padding-top: 8px; white-space: nowrap; background: rgba(255, 255, 255, .85); }
.level strong { font-size: 35px; font-weight: normal; line-height: 44px; }
.record { position: absolute; left: 1029px; top: 4px; width: 95px; height: 87px; display: grid; place-items: center; }
.record svg { width: 30px; height: 30px; }
.panel { left: 584px; top: 144px; width: 537px; height: 524px; padding: 15px 18px; display: grid; grid-template-columns: 164px 321px; row-gap: 10px; align-items: center; align-content: start; grid-template-rows: repeat(7, 44px) 40px 40px 44px; white-space: nowrap; }
.check { display: flex; align-items: center; gap: 12px; padding-left: 6px; }
.full { grid-column: 1 / 3; }
.distortion { height: 44px; }
.ranges { position: absolute; left: 941px; top: 487px; width: 182px; display: flex; flex-direction: column; gap: 4px; }
.ranges .btn { height: 41px; }
.rta-scroll { margin: 0 58px 0 129px; }
.rta-scroll i { margin: 0 5px 0 4px; }
.rta-legend { margin: 8px 213px 0 235px; height: 158px; border: 2px solid #ccc; background: #fff; color: #000; display: flex; flex-direction: column; padding-top: 1px; }
.rta-legend label { height: 52px; display: grid; grid-template-columns: 28px 384px 104px 179px; column-gap: 12px; align-items: center; padding-left: 15px; }
.rta-legend .line { height: 4px; background: #000; }
.rta-legend .rms { color: #ff0033; }
.rta-legend .peak { color: #d40000; }
```
FILE: app.js
```js
const COLORS = { blue: '#0432ff', cyan: '#00fdff', forest: '#00682f', green: '#00f900', orange: '#ff9800', red: '#ff0033' };

/* ---- measurement cards ---- */
const cards = [
  ['piste 9 Droite V', '12:32:32', 'calibration', COLORS.blue, '65536-point spectrum'],
  ['piste 9 Gauche V', '12:34:54', 'calibration', COLORS.cyan, ''],
  ['piste 8 Droite L', '12:36:47', 'calibration', COLORS.forest, ''],
  ['piste 8 Gauche L', '12:37:39', 'calibration', COLORS.green, ''],
  ['dB Average 1', '12:38:38', 'N/A', COLORS.orange, 'Averaged data'],
  ['RMS Average 1', '12:40:39', 'N/A', COLORS.red, 'Averaged data produced from the rms magnitudes of piste 9 Droite V, piste 9 Gauche V, piste 8 Droite L, piste 8 Gauche L']
];
const thumbTrace = '0,82 15,85 20,100 24,250 30,330 37,325 45,335 50,370 55,350 65,383 145,383 149,290 153,275 158,310 163,285 170,330 176,383 196,383 200,320 205,330 211,298 217,360 222,383 237,383 239,240 241,383 253,383 257,330 262,383 330,383 331,35 333,35 334,383 346,383 347,78 349,78 350,383 379,383 380,262 381,383 388,383 389,245 390,383 396,383 397,310 398,383 488,383';
let thumbGrid = '';
for (let d = 0; d < 3; d++) for (let n = 1; n < 10; n++) thumbGrid += `M${((d + Math.log10(n / 2)) * 163).toFixed(0)} 0V383`;
for (let y = 15; y < 383; y += 39) thumbGrid += `M0 ${y}H488`;
document.getElementById('cards').innerHTML = cards.map(([name, time, cal, color, notes], i) => `
  <article class="card${i === 5 ? ' selected' : ''}">
    <svg class="shape"><path d="M2 62H166L226 2H544V445H2Z"/></svg>
    <div class="thumb"><svg viewBox="0 0 488 383" preserveAspectRatio="none"><path d="${thumbGrid}" stroke="#dedede" stroke-width="3"/>
      <polyline points="${thumbTrace}" fill="none" stroke="${color}" stroke-width="${i > 3 ? 3 : 2}" vector-effect="non-scaling-stroke"/></svg>
      <u>${i + 1}</u><b>20</b><span>20.0k</span></div>
    <div class="meta"><input type="text" value="${name}" aria-label="Name ${i + 1}"><p>Jun 6, 2025 ${time}</p><p>Mic/Meter: N/A</p><p>Soundcard: ${cal}</p></div>
    <div class="side-icons"><svg><use href="#i-delete"/></svg><svg><use href="#i-save-pencil"/></svg><svg style="color:${color}"><use href="#i-brush"/></svg><svg><use href="#i-note"/></svg></div>
    <textarea class="notes" aria-label="Notes ${i + 1}">${notes}</textarea>
  </article>`).join('');

/* ---- legend and status digits ---- */
document.getElementById('legend').innerHTML = [
  ['1: piste 9 Droite V', '-17.8', COLORS.blue], ['2: piste 9 Gauche V', '-24.3', COLORS.cyan], ['3: piste 8 Droite L', '-25.9', COLORS.forest],
  ['4: piste 8 Gauche L', '-24.5', COLORS.green], ['5: dB Average 1', '-23.1', COLORS.orange], ['6: RMS Average 1', '-21.8', COLORS.red]
].map(([t, v, c], i) => `<label style="color:${c}"${i > 3 ? ' class="thick"' : ''}><input type="checkbox" checked><span>${t}</span><i></i><output>${v} dBFS</output></label>`).join('');
const nibble = '<s>' + '<span>0</span>'.repeat(4) + '</s>';
document.getElementById('bits').innerHTML = ('<u>' + nibble + nibble + '</u>').repeat(4);

/* ---- axes ---- */
function grid(w, h, fx, fMin, fMax, fy, top, bottom, step, majorStep) {
  let minor = '', major = '', decade = '';
  for (let db = bottom; db <= top; db += step) {
    const s = `M0 ${Math.round(fy(db))}H${w}`;
    if (db % majorStep === 0) major += s; else minor += s;
  }
  for (let e = 0; e < 5; e++) for (let n = 1; n < 10; n++) {
    const f = n * 10 ** e;
    if (f < fMin || f > fMax) continue;
    const s = `M${Math.round(fx(f))} 0V${h}`;
    if (n === 1) decade += s; else major += s;
  }
  return `<path d="${minor}" stroke="#dcdcdc" stroke-width="2.500"/><path d="${major}" stroke="#bfbfbf" stroke-width="2.500"/><path d="${decade}" stroke="#858585" stroke-width="2.500"/><rect x="1" y="1" width="${w - 2}" height="${h - 2}" fill="none" stroke="#bfbfbf" stroke-width="2.500"/>`;
}
const xs = (id, list) => { document.getElementById(id).innerHTML = list.map(([t, p, tag = 'span']) => `<${tag} style="left:${p.toFixed(2)}%">${t}</${tag}>`).join(''); };
const ys = (id, list) => { document.getElementById(id).innerHTML = list.map(([t, p, tag = 'span', c = '']) => `<${tag} class="${c}" style="top:${p.toFixed(2)}%">${t}</${tag}>`).join(''); };

const mx = f => 402.6 + 756.4 * (Math.log10(f) - 1);
const my = db => 98 - (db + 20) * 23.52;
const k = f => f >= 1000 ? (f / 1000).toFixed(1) + 'k' : String(f);
xs('main-x', [3, 4, 5, 6, 7, 8, 9, 20, 30, 40, 50, 60, 70, 80, 100, 200, 300, 400, 500, 600, 800, 1000, 2000, 3000, 4000, 5000]
  .map(f => [k(f), (mx(f) + 2) / 25.8]).concat([['9.81', 15.31, 'em'], ['7.56kHz', 99.5]]));
ys('main-y', [-20, -25, -30, -35, -40, -45, -50, -55, -60, -65, -70].map(d => [d, (my(d) + 1) / 13]).concat([['-17.97', 50 / 13, 'em']]));

/* ---- traces: recorded in tiles of [originX, originY, scaleX, scaleY] ---- */
const TILE = {
  A: [-99, -152, 1.6333, 2.24], B: [-19, 668, 1.4255, 1.7658], C: [1221, 848, 1.96, 2.2147],
  E: [-123, -204, 1.18788, 2.8], F: [-123, 316, 1.18788, 2.7034], G: [577, 276, 2.8, 3]
};
function pts(tile, str, dx = 0, dy = 0) {
  const [ox, oy, sx, sy] = TILE[tile];
  return str.trim().split(/\s+/).map(p => { const [x, y] = p.split(',').map(Number); return [ox + (x + dx) / sx, oy + (y + dy) / sy]; });
}
function smooth(p) {
  let d = `M${p[0]}`;
  for (let i = 0; i < p.length - 1; i++) {
    const a = p[i - 1] || p[i], b = p[i], c = p[i + 1], e = p[i + 2] || c;
    d += `C${b[0] + (c[0] - a[0]) / 6} ${b[1] + (c[1] - a[1]) / 6} ${c[0] - (e[0] - b[0]) / 6} ${c[1] - (e[1] - b[1]) / 6} ${c[0]} ${c[1]}`;
  }
  return d;
}
const straight = p => 'M' + p.map(q => q.map(v => v.toFixed(1)).join(' ')).join('L');

const low = {
  blue: [['B', '28,567 60,455 100,330 135,225 172,115 217,0'], ['A', '475,1568 510,1440 545,1280 580,1120 605,990 628,880 660,740 697,600 730,510 760,462 795,443 830,452 862,472 905,545 950,618 1003,652 1050,689 1100,708 1138,755 1165,810 1190,850 1212,864 1232,858 1250,873 1278,879 1296,899 1320,905 1333,960 1343,1080 1352,1350 1360,1568'], ['B', '1080,0 1088,200 1095,350 1103,470 1118,545 1142,597 1160,558 1172,530 1190,548 1212,590 1228,640 1238,730 1250,790 1270,800 1285,720 1300,655 1312,645 1325,660 1335,720 1343,770 1353,640 1362,750 1370,870 1380,930 1388,1010 1397,1045 1408,990 1415,1030 1425,1010 1433,1065 1440,1045 1448,1090 1455,1116']],
  cyan: [['B', '28,268 65,240 100,200 130,140 165,70 195,0'], ['A', '448,1568 480,1460 515,1355 547,1270 575,1190 600,1130 620,1095 650,1070 697,1010 720,950 745,880 775,820 800,790 830,777 855,768 880,778 915,815 950,850 1000,863 1040,874 1080,870 1110,880 1135,905 1160,950 1190,1005 1215,1036 1232,1037 1262,1052 1280,1050 1305,1077 1320,1078 1330,1130 1340,1300 1350,1568'], ['B', '1078,0 1088,200 1097,380 1108,480 1125,545 1142,555 1158,525 1170,495 1180,510 1190,555 1205,545 1215,570 1228,610 1240,670 1252,700 1275,738 1285,700 1293,655 1305,660 1315,670 1327,635 1335,660 1345,740 1353,660 1364,800 1378,900 1392,960 1402,905 1412,940 1425,990 1440,972 1448,975 1458,1010 1466,1070 1478,1042 1485,1090 1492,1070 1500,1110 1516,1070 1525,1112 1545,1116']],
  forest: [['B', '28,457 55,340 80,230 110,120 152,0'], ['A', '375,1568 410,1450 446,1345 490,1160 515,1060 545,965 575,860 605,785 630,745 660,722 690,740 730,785 775,830 820,890 870,930 920,957 955,984 1005,996 1050,1016 1090,1005 1135,992 1165,1005 1200,1014 1235,1010 1275,1014 1295,1027 1320,1020 1330,1045 1340,1180 1352,1568'], ['B', '1078,0 1086,220 1092,450 1100,640 1106,740 1113,780 1125,740 1140,680 1150,720 1160,775 1170,785 1180,830 1190,848 1205,835 1220,852 1232,850 1240,880 1248,928 1262,915 1275,877 1285,940 1295,973 1302,970 1310,912 1320,935 1328,932 1337,990 1343,870 1348,700 1353,570 1360,760 1368,900 1378,970 1385,1060 1390,1110 1400,1058 1410,1116']],
  green: [['A', '163,1799 207,1747 258,1660 310,1568 350,1470 390,1360 420,1260 446,1170 480,1040 515,920 550,800 580,700 605,635 630,593 660,573 690,585 720,630 745,680 780,745 820,810 860,840 890,880 920,917 950,930 985,933 1010,942 1045,970 1080,976 1130,975 1160,998 1200,1010 1230,1008 1270,1013 1300,1022 1318,1018 1332,1060 1342,1250 1354,1568'], ['B', '1080,0 1090,150 1100,270 1113,370 1125,405 1142,435 1158,480 1172,520 1185,555 1205,573 1215,560 1232,615 1250,650 1265,690 1280,710 1293,735 1310,760 1322,773 1332,750 1340,780 1347,680 1353,575 1362,700 1370,800 1382,850 1393,905 1402,893 1412,925 1423,908 1433,945 1445,973 1458,945 1466,985 1475,1025 1485,1050 1500,1028 1510,1050 1518,1040 1525,1095 1533,1103 1545,1090 1555,1070 1562,1020 1568,1040 1572,1060 1578,1116']],
  orange: [['B', '28,320 60,245 95,165 130,80 160,0'], ['A', '405,1568 440,1450 480,1310 515,1180 545,1070 575,960 605,880 640,810 670,765 710,732 740,712 765,709 795,714 825,730 860,748 900,795 950,848 1003,862 1030,882 1060,889 1100,889 1135,905 1160,945 1185,970 1212,982 1232,977 1250,988 1278,991 1297,1007 1320,1010 1332,1060 1342,1200 1356,1568'], ['B', '1079,0 1088,220 1097,410 1108,520 1118,555 1138,565 1160,585 1172,580 1188,628 1205,632 1218,655 1232,710 1245,760 1265,778 1285,775 1298,760 1308,745 1320,758 1327,750 1340,795 1348,700 1354,620 1362,760 1368,860 1378,900 1385,970 1392,1000 1404,965 1415,1005 1422,1000 1432,1040 1440,1030 1450,1060 1460,1060 1470,1095 1476,1085 1485,1112 1500,1114 1545,1116']],
  red: [['B', '28,173 60,130 90,85 115,40 138,0'], ['A', '385,1568 415,1470 446,1370 480,1240 515,1105 545,985 575,880 605,800 635,745 665,715 710,687 745,658 780,649 810,656 860,680 900,735 950,797 1003,823 1040,847 1100,858 1138,886 1165,930 1190,960 1212,972 1232,967 1250,977 1278,981 1297,995 1318,999 1332,1050 1343,1200 1358,1568'], ['B', '1079,0 1088,220 1097,380 1107,470 1120,520 1145,548 1160,556 1170,553 1190,598 1212,610 1228,655 1240,720 1250,745 1270,765 1285,755 1295,730 1308,718 1320,727 1327,715 1340,770 1348,690 1353,615 1360,730 1368,850 1378,880 1385,960 1393,985 1405,953 1413,985 1422,990 1430,1020 1440,1018 1450,1043 1458,1045 1468,1080 1475,1075 1483,1105 1490,1100 1500,1116 1518,1105 1530,1118 1562,1108 1570,1118']]
};
const redMid = ['133,1002 140,990 147,1002', '158,1002 170,780 178,650 190,490 203,380 215,180 220,80 240,60 246,160 256,232 263,160 272,200 290,110 305,210 320,215 330,190 345,80 355,160 365,200 380,125 395,115 402,220 412,340 424,295 438,415 446,385 455,430 462,560 474,670 483,590 493,680 505,850 512,920 521,1002', '625,1002 640,985 650,820 658,660 662,520 670,380 680,430 688,400 697,475 705,330 711,310 720,400 728,290 736,240 748,345 760,240 766,270 773,110 782,140 792,170 800,340 809,320 820,430 828,400 835,480 842,350 850,360 858,560 866,650 870,720 878,690 887,760 895,690 905,740 912,700 920,740 927,675 935,830 942,740 950,830 958,840 965,910 975,840 985,770 998,830 1005,770 1012,780 1018,580 1027,640 1035,720 1046,590 1052,60 1060,60 1063,700 1067,820 1075,730 1082,770 1090,730 1100,770 1110,655 1118,760 1128,830 1135,800 1142,690 1149,640 1158,775 1168,680 1175,680 1180,820 1190,520 1201,360 1210,560 1217,680 1225,600 1232,690 1237,610 1243,740 1250,760 1254,830 1261,920 1268,830 1275,830 1283,930 1288,770 1294,740 1300,780 1307,640 1317,615 1322,880 1330,720 1338,920 1345,720 1350,860 1355,940 1361,960 1366,1002', '1415,1002 1422,980 1432,1002 1444,955 1452,990 1460,1002'];
const greenMid = ['150,1002 158,900 170,700 185,500 205,300 212,170 222,60 245,150 256,295 264,190 272,285 282,180 297,160 310,290 323,240 335,335 345,250 360,180 375,110 400,110 410,330 425,350 443,330 452,400 462,560 474,690 483,620 495,760 505,870 518,1002', '625,1002 645,960 655,800 670,620 678,500 686,620 690,585 697,665 708,520 720,440 735,310 743,420 750,530 758,410 768,470 780,375 785,420 792,390 800,480 810,430 825,450 834,500 842,275 848,330 855,560 862,810 872,720 885,760 900,660 908,700 916,625 927,690 940,800 950,880 965,1002 975,820 986,730 997,860 1008,970 1020,800 1025,900 1035,760 1045,720 1055,800 1067,970 1078,870 1090,800 1097,700 1108,800 1120,910 1130,800 1140,620 1149,560 1155,650 1160,600 1166,640 1170,605 1178,720 1182,900 1192,780 1200,650 1210,780 1217,950 1225,830 1232,930 1238,850 1240,1002 1248,860 1255,1002 1262,890 1269,1002 1277,860 1285,1002 1295,850 1305,880 1315,700 1328,620 1338,600 1345,720 1355,840 1365,900 1372,1002', '1418,1002 1422,960 1432,990 1440,910 1450,920 1458,1002'];
const cyanMid = ['160,1002 165,900 175,560 186,455 205,460 215,200 240,60 300,60 308,130 315,110 322,160 355,130 365,320 378,210 388,245 396,220 410,270 420,210 428,270 438,480 445,420 452,315 460,400 470,600 483,425 492,600 500,780 515,1002', '620,1002 630,855 640,862 650,800 660,480 670,245 680,330 692,290 702,330 710,210 720,290 735,125 747,200 757,90 785,60 798,115 808,230 815,350 825,370 840,350 855,480 870,640 880,650 895,610 905,660 918,630 927,620 935,720 943,650 950,660 955,740 960,690 965,740 975,730 985,750 1000,680 1010,640 1018,425 1027,500 1036,620 1047,520 1055,640 1070,660 1082,690 1100,680 1112,590 1125,700 1135,920 1145,800 1155,945 1168,870 1180,760 1190,400 1200,155 1208,350 1215,500 1222,445 1230,520 1235,460 1245,600 1255,720 1262,800 1267,725 1274,800 1280,730 1287,780 1293,590 1300,560 1304,510 1309,470 1317,520 1325,650 1335,780 1350,900 1360,1002', '1440,1002 1448,950 1457,852 1461,900 1467,890 1472,1002'];
const blueMid = ['137,1002 140,885 144,1002', '155,1002 175,800 190,500 203,525 212,440 220,250 235,80 262,125 280,245 290,140 310,160 330,200 350,110 365,345 376,265 386,330 397,312 410,410 422,350 437,535 447,500 455,600 463,720 474,860 483,735 493,900 502,1002', '625,1002 633,908 645,960 655,700 665,450 670,330 678,450 690,290 698,420 705,205 715,350 725,300 738,190 750,230 763,160 775,90 792,140 800,250 815,380 830,400 850,480 866,570 875,760 890,820 900,790 912,860 918,980 925,850 936,1002 943,850 952,930 965,880 975,940 985,910 1000,760 1018,550 1030,600 1047,520 1060,640 1073,620 1082,680 1092,655 1110,640 1127,720 1145,850 1160,900 1175,840 1190,500 1200,350 1212,520 1225,580 1235,560 1250,650 1262,830 1275,850 1290,780 1310,640 1322,820 1332,1002 1342,920 1348,1002'];
const mid = {
  blue: blueMid.map(s => pts('C', s)), cyan: cyanMid.map(s => pts('C', s)),
  forest: greenMid.map(s => pts('C', s, -1, 26)), green: greenMid.map(s => pts('C', s)),
  orange: redMid.map(s => pts('C', s, 0, 24)), red: redMid.map(s => pts('C', s))
};
/* harmonic peaks: x, top, half width at the top, half width at the floor */
const peaks = {
  blue: [[2474, 1285, 1, 2], [2485, 1170, 2, 4], [2557, 1234, 1, 2]],
  cyan: [[2062, 1227, 2, 6], [2093, 1014, 2, 5], [2518, 1178, 2, 6], [2527, 1234, 2, 4], [2555, 1236, 2, 3]],
  forest: [[1160, 1250, 1, 1], [2506, 1216, 2, 4], [2537, 1264, 2, 2]],
  green: [[2092.500, 1024, 2, 4], [2194.500, 34, 2, 7], [2272.500, 152, 2, 7], [2335, 1055, 2, 4], [2422.500, 722, 2, 5], [2463.500, 671, 2, 6], [2500, 868, 2, 6], [2507, 1220, 1, 3], [2537, 1292, 1, 2]],
  orange: [[2197, 1000, 1, 2]],
  red: [[2062, 1286, 3, 5], [2093, 1096, 3, 5], [2194.500, 75, 4, 10], [2272.500, 199, 4, 10], [2335, 1139, 3, 5], [2422.500, 763, 4, 6], [2463.500, 704, 4, 7], [2500, 908, 4, 8], [2485, 1269, 3, 4], [2518, 1258, 3, 5], [2527, 1294, 3, 4], [2555, 1294, 3, 4], [2508, 1275, 2, 3]]
};
let out = grid(2580, 1300, mx, 2.94, 7560, my, -16, -71, 1, 5);
for (const name of Object.keys(COLORS)) {
  const w = name === 'red' || name === 'orange' ? 9 : 4;
  const d = smooth(low[name].flatMap(([t, s]) => pts(t, s)));
  out += `<g fill="none" stroke="${COLORS[name]}" stroke-width="${w}" stroke-linejoin="round" stroke-linecap="round"><path d="${d}"/><path d="${mid[name].map(straight).join('')}"/></g>`;
  out += `<g fill="${COLORS[name]}" stroke="${COLORS[name]}" stroke-width="1" stroke-linejoin="round">` + peaks[name].map(([x, t, a, b]) => `<path d="M${x - b} 1300L${x - a} ${t}H${x + a}L${x + b} 1300Z"/>`).join('') + '</g>';
}
out += '<path d="M0 50H2574M396 0V1300" stroke="#000" stroke-width="3"/>';
document.getElementById('main-plot').innerHTML = out;

/* ---- RTA window ---- */
const rx = f => 188.5 + 271.1 * (Math.log10(f) - 1);
const ry = db => 96.5 - (db + 20) * 7.46;
const kk = f => f >= 1000 ? f / 1000 + 'k' : String(f);
xs('rta-x', [3, 4, 5, 7, 20, 40, 60, 100, 300, 600, 1000, 2000, 4000, 6000, 10000].map(f => [kk(f), (rx(f) + 1) / 11.28]).concat([['2', .3], ['9.9', 16.5, 'em'], ['29.9kHz', 99.1]]));
ys('rta-y', [-10, -20, -30, -40, -50, -60, -70, -80].map(d => [d, ry(d) / 6.2, 'span', d % 20 ? 'dim' : '']).concat([['-17.8', 12.9, 'em']]));
let seed = 7;
const rnd = () => (seed = (seed * 16807) % 2147483647) / 2147483647;
let tail = '';
for (let x = 826; x < 1226; x += 7) tail += ` ${x},${Math.round(775 + rnd() * (x < 925 ? 120 : 50))} ${x + 4},${Math.round((x < 970 && x > 826 ? 960 : 900) + rnd() * 130)}`;
const spectrum = [
  ...pts('F', '148,285 165,260 180,230 195,180 210,105 235,0'),
  ...pts('E', '250,1370 268,1290 285,1205 300,1110 315,1000 325,920 335,870 345,820 358,798 370,795 382,806 395,840 405,865 420,878 432,895 445,902 458,938 470,965 478,958 485,965 492,967 500,982 505,1040 510,1200 515,1450'),
  ...pts('F', '516,0 520,130 525,160 532,188 542,152 553,185 562,275 569,287 576,225 583,208 588,225 592,258 594,218 598,320 602,325 607,405 612,380 618,400 625,440 629,460 632,440 635,475 638,450 641,485 648,435 655,440 659,490 664,535 668,510 672,545 675,520 680,560 684,540 688,555 690,575 692,445 695,560 700,570 702,590 705,570 709,608 713,550 718,585 722,610 727,580 731,600 733,560 736,612 739,550 743,600 746,510 748,395 751,520 755,330 758,235 762,255 766,80 770,35 774,100 777,145 781,70 785,140 788,110 792,52 797,180 800,150 803,190 806,160 810,190 815,260 820,380 823,335 828,480 832,590 836,630'),
  ...pts('G', '18,850 28,750 35,810 45,740 55,570 62,630 72,320 80,370 92,265 98,350 108,255 115,320 130,215 140,330 170,400 183,510 193,490 200,600 204,500 209,610 215,520 225,590 240,500 250,420 260,460 270,60 276,500 287,450 298,440 305,510 315,500 322,580 335,480 344,325 353,440 360,400 375,500 387,560 400,465 410,560 420,640 433,780 440,700 445,815 455,660 465,630 480,660 485,850 492,975 497,730 503,950 510,780 520,840 528,670 538,910 545,750 556,800 573,600 578,780 590,960 597,1000 603,620 612,800 620,1020 628,920 634,1030 644,780 655,1020 664,980 678,820 686,1020 697,760 708,900 718,940 730,800 745,980 755,780 768,1000 780,760 793,930 803,780 815,980' + tail + ' 1228,1040')
];
/* x, top, width */
const towers = [[573, 600, 5], [603, 610, 4], [705, -550, 5], [698, 440, 5], [711, 440, 5], [782, -420, 6], [845, 610, 4], [874, 760, 8], [933, 110, 5], [974, 110, 5], [1010, 280, 5], [1065, 610, 4], [1092, 610, 4], [1118, 610, 5]];
document.getElementById('rta-plot').innerHTML = grid(1128, 620, rx, 2.1, 29900, ry, -8, -86, 2, 20) +
  `<g fill="none" stroke="#000" stroke-width="3.500" stroke-linejoin="round"><path d="${straight(spectrum)}"/>` +
  towers.map(([x, y, w]) => `<path stroke-width="${w}" d="${straight(pts('G', `${x},${y} ${x},880`))}"/>`).join('') +
  `<path fill="#000" d="${straight(pts('G', '968,610 1042,610 1048,880 925,880'))}Z"/></g>` +
  '<path d="M0 80H1128M188.500 0V620" stroke="#000" stroke-width="3"/>';
```
